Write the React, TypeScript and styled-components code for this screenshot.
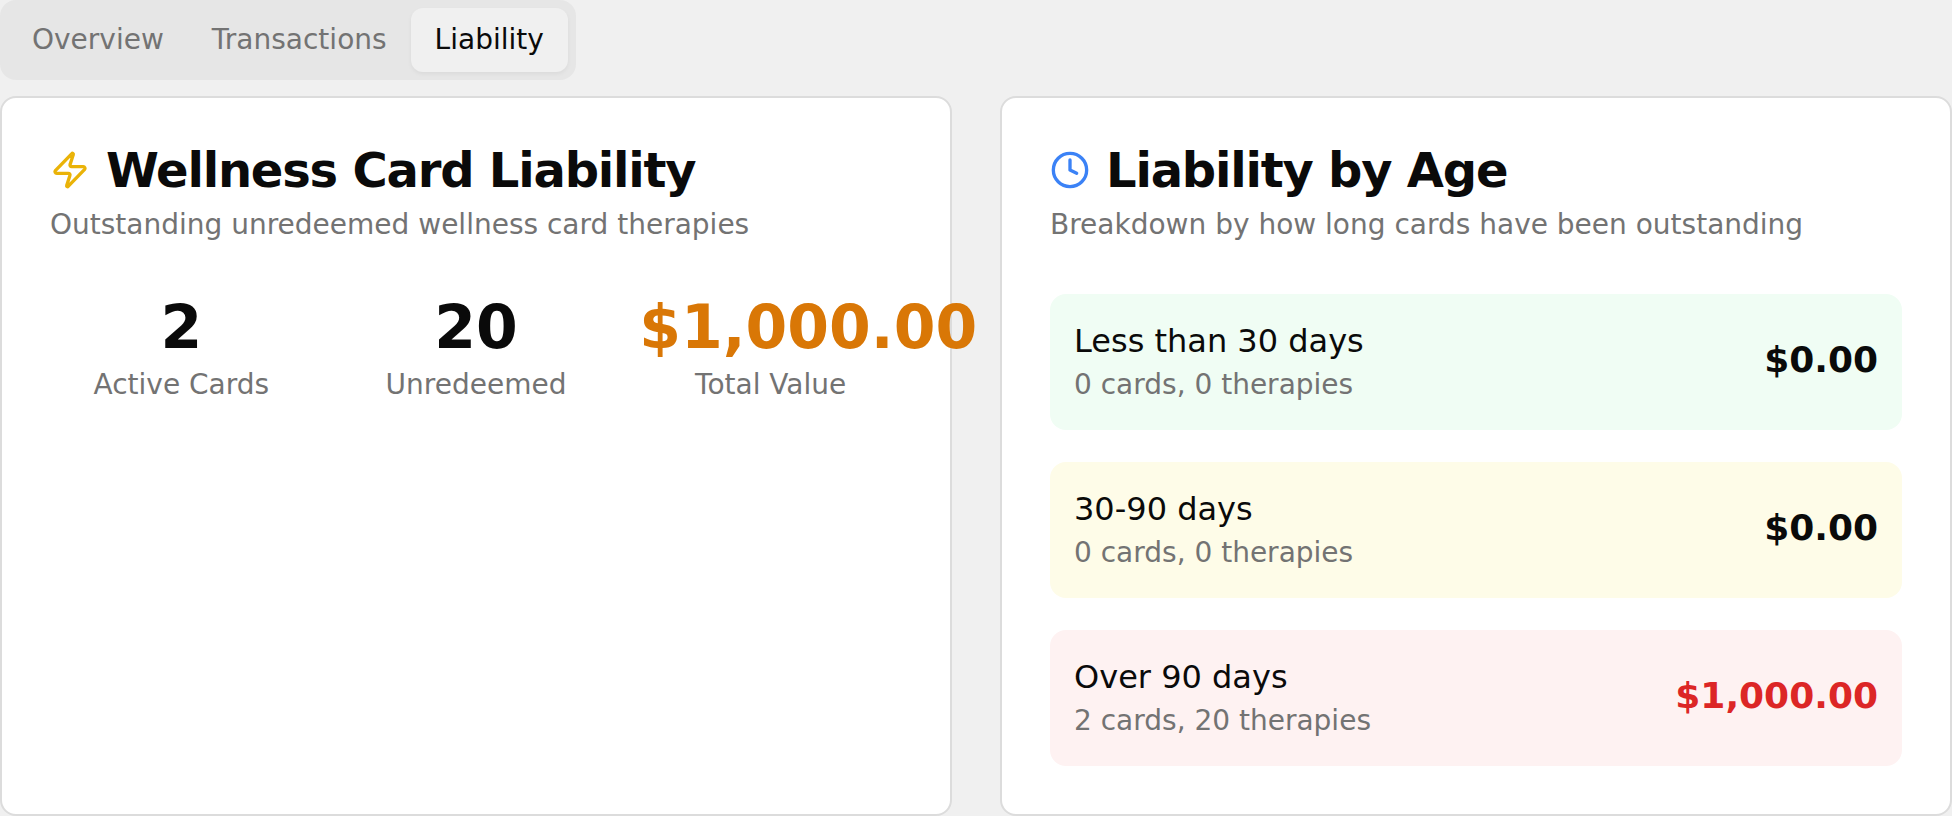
import React from "react";
import styled, { createGlobalStyle } from "styled-components";
import { Zap, Clock } from "lucide-react";

const Global = createGlobalStyle`
  * { box-sizing: border-box; }
  html, body { margin: 0; padding: 0; background: #f0f0f0; }
  body { font-family: "DejaVu Sans", sans-serif; color: #0a0a0a; overflow: hidden; }
`;

const Page = styled.div`
  width: 1952px;
  height: 816px;
  display: flex;
  flex-direction: column;
  gap: 16px;
`;

const TabList = styled.div`
  align-self: flex-start;
  display: flex;
  height: 80px;
  padding: 8px;
  background: #e6e6e6;
  border-radius: 16px;
`;

const Tab = styled.div<{ $active?: boolean }>`
  display: flex;
  align-items: center;
  padding: 0 24px;
  font-size: 28px;
  line-height: 40px;
  border-radius: 12px;
  color: ${(p) => (p.$active ? "#0a0a0a" : "#737373")};
  background: ${(p) => (p.$active ? "#f0f0f0" : "transparent")};
  box-shadow: ${(p) => (p.$active ? "0 2px 4px rgba(0,0,0,0.05)" : "none")};
`;

const Columns = styled.div`
  flex: 1;
  display: grid;
  grid-template-columns: 1fr 1fr;
  gap: 48px;
`;

const Card = styled.section`
  display: flex;
  flex-direction: column;
  gap: 48px;
  padding: 48px;
  background: #fff;
  border: 2px solid #dcdcdc;
  border-radius: 16px;
`;

const Header = styled.header`
  display: flex;
  flex-direction: column;
  gap: 12px;
`;

const Title = styled.h2`
  margin: 0;
  display: flex;
  align-items: center;
  gap: 16px;
  font-size: 48px;
  line-height: 48px;
  font-weight: 700;
  letter-spacing: -0.025em;
`;

const Subtitle = styled.p`
  margin: 0;
  padding-bottom: 2px;
  font-size: 28px;
  line-height: 38px;
  color: #737373;
`;

const Stats = styled.div`
  display: grid;
  grid-template-columns: repeat(3, 1fr);
  gap: 32px;
`;

const Stat = styled.div`
  text-align: center;
  min-width: 0;
`;

const StatValue = styled.div<{ $color?: string }>`
  font-size: 60px;
  line-height: 66px;
  margin-bottom: 6px;
  font-weight: 700;
  color: ${(p) => p.$color || "#0a0a0a"};
`;

const StatLabel = styled.div`
  padding-bottom: 2px;
  font-size: 28px;
  line-height: 38px;
  color: #737373;
`;

const Rows = styled.div`
  display: flex;
  flex-direction: column;
  gap: 32px;
`;

const Row = styled.div<{ $bg: string }>`
  display: flex;
  align-items: center;
  justify-content: space-between;
  padding: 24px;
  border-radius: 16px;
  background: ${(p) => p.$bg};
`;

const RowLabel = styled.div`
  padding-bottom: 2px;
  font-size: 32px;
  line-height: 46px;
`;

const RowSub = styled.div`
  padding-bottom: 2px;
  font-size: 28px;
  line-height: 38px;
  color: #737373;
`;

const Amount = styled.div<{ $color?: string }>`
  font-size: 36px;
  line-height: 52px;
  margin-bottom: 4px;
  font-weight: 700;
  color: ${(p) => p.$color || "#0a0a0a"};
`;

const rows = [
  { label: "Less than 30 days", sub: "0 cards, 0 therapies", amount: "$0.00", bg: "#f0fdf4" },
  { label: "30-90 days", sub: "0 cards, 0 therapies", amount: "$0.00", bg: "#fefce8" },
  { label: "Over 90 days", sub: "2 cards, 20 therapies", amount: "$1,000.00", bg: "#fef2f2", color: "#dc2626" },
];

export default function App() {
  return (
    <Page>
      <Global />
      <TabList>
        <Tab>Overview</Tab>
        <Tab>Transactions</Tab>
        <Tab $active>Liability</Tab>
      </TabList>
      <Columns>
        <Card>
          <Header>
            <Title>
              <Zap size={40} color="#eab308" />
              Wellness Card Liability
            </Title>
            <Subtitle>Outstanding unredeemed wellness card therapies</Subtitle>
          </Header>
          <Stats>
            <Stat>
              <StatValue>2</StatValue>
              <StatLabel>Active Cards</StatLabel>
            </Stat>
            <Stat>
              <StatValue>20</StatValue>
              <StatLabel>Unredeemed</StatLabel>
            </Stat>
            <Stat>
              <StatValue $color="#d97706">$1,000.00</StatValue>
              <StatLabel>Total Value</StatLabel>
            </Stat>
          </Stats>
        </Card>
        <Card>
          <Header>
            <Title>
              <Clock size={40} color="#3b82f6" />
              Liability by Age
            </Title>
            <Subtitle>Breakdown by how long cards have been outstanding</Subtitle>
          </Header>
          <Rows>
            {rows.map((r) => (
              <Row key={r.label} $bg={r.bg}>
                <div>
                  <RowLabel>{r.label}</RowLabel>
                  <RowSub>{r.sub}</RowSub>
                </div>
                <Amount $color={r.color}>{r.amount}</Amount>
              </Row>
            ))}
          </Rows>
        </Card>
      </Columns>
    </Page>
  );
}
